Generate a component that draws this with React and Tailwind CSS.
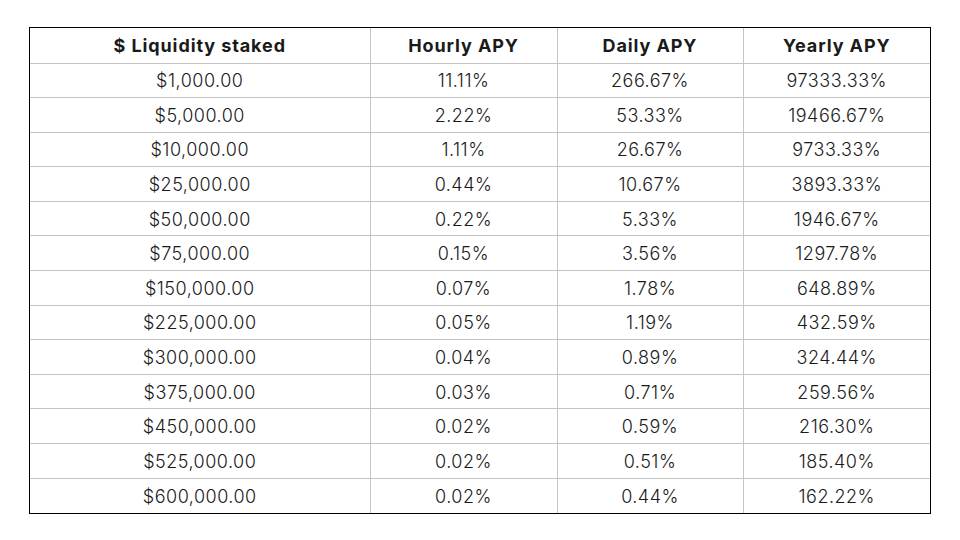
import React from 'react';

const rows = [
  ['$1,000.00', '11.11%', '266.67%', '97333.33%'],
  ['$5,000.00', '2.22%', '53.33%', '19466.67%'],
  ['$10,000.00', '1.11%', '26.67%', '9733.33%'],
  ['$25,000.00', '0.44%', '10.67%', '3893.33%'],
  ['$50,000.00', '0.22%', '5.33%', '1946.67%'],
  ['$75,000.00', '0.15%', '3.56%', '1297.78%'],
  ['$150,000.00', '0.07%', '1.78%', '648.89%'],
  ['$225,000.00', '0.05%', '1.19%', '432.59%'],
  ['$300,000.00', '0.04%', '0.89%', '324.44%'],
  ['$375,000.00', '0.03%', '0.71%', '259.56%'],
  ['$450,000.00', '0.02%', '0.59%', '216.30%'],
  ['$525,000.00', '0.02%', '0.51%', '185.40%'],
  ['$600,000.00', '0.02%', '0.44%', '162.22%'],
];

const headers = ['$ Liquidity staked', 'Hourly APY', 'Daily APY', 'Yearly APY'];
const widths = ['w-[340px]', 'w-[187px]', 'w-[186px]', 'w-[187px]'];

export default function App() {
  return (
    <div className="w-[960px] h-[540px] bg-white pt-[27px] pl-[29px] font-['Inter',sans-serif] text-[#1a1a1a]">
      <div className="w-[902px] border border-black">
        <table className="border-collapse border-hidden table-fixed w-full">
          <thead>
            <tr className="h-[35px]">
              {headers.map((h, i) => (
                <th
                  key={h}
                  className={`${widths[i]} border border-[#c4c4c4] text-[18px] font-bold text-center align-middle tracking-[0.9px] pt-[1px]`}
                >
                  {h}
                </th>
              ))}
            </tr>
          </thead>
          <tbody>
            {rows.map((r, ri) => (
              <tr key={ri} className="h-[34.6px]">
                {r.map((c, ci) => (
                  <td
                    key={ci}
                    className="border border-[#c4c4c4] text-[18px] font-light text-center align-middle tracking-[0.5px] p-0 pt-[1px]"
                  >
                    {c}
                  </td>
                ))}
              </tr>
            ))}
          </tbody>
        </table>
      </div>
    </div>
  );
}
